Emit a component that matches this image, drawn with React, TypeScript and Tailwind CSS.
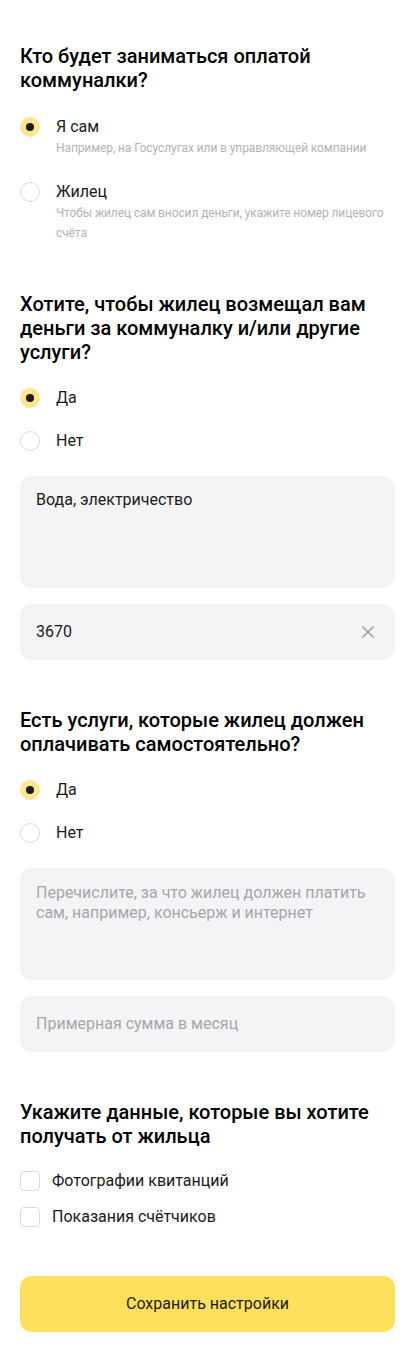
import React from "react";

function Radio({ checked, label, hint }: { checked?: boolean; label: string; hint?: string }) {
  return (
    <div className="flex items-start gap-4">
      <div className="h-6 flex items-center shrink-0">
        {checked ? (
          <div className="w-5 h-5 rounded-full bg-[#fde68f] flex items-center justify-center">
            <div className="w-2 h-2 rounded-full bg-[#1a1a1a]" />
          </div>
        ) : (
          <div className="w-5 h-5 rounded-full border border-[#d9d9d9] bg-white" />
        )}
      </div>
      <div className="flex flex-col">
        <div className="text-[16px] leading-6 text-[#1a1a1a]">{label}</div>
        {hint && <div className="text-[12px] leading-5 text-[#b3b3b3] mt-[-1px] tracking-[-0.1px]">{hint}</div>}
      </div>
    </div>
  );
}

function Checkbox({ label }: { label: string }) {
  return (
    <div className="flex items-center gap-3 h-6">
      <div className="w-5 h-5 rounded-[4px] border border-[#d9d9d9] bg-white shrink-0" />
      <div className="text-[16px] leading-6 text-[#1a1a1a]">{label}</div>
    </div>
  );
}

function H({ children }: { children: React.ReactNode }) {
  return <h2 className="text-[20px] leading-6 font-medium text-[#000]">{children}</h2>;
}

export default function App() {
  return (
    <div className="w-[415px] bg-white px-5 pt-[44px] pb-5" style={{ fontFamily: "Roboto, 'Noto Sans', sans-serif" }}>
      <H>Кто будет заниматься оплатой коммуналки?</H>
      <div className="mt-[23px] flex flex-col gap-[22px]">
        <Radio checked label="Я сам" hint="Например, на Госуслугах или в управляющей компании" />
        <Radio label="Жилец" hint="Чтобы жилец сам вносил деньги, укажите номер лицевого счёта" />
      </div>

      <div className="mt-[49px]">
        <H>Хотите, чтобы жилец возмещал вам деньги за коммуналку и/или другие услуги?</H>
      </div>
      <div className="mt-[22px] flex flex-col gap-[19px]">
        <Radio checked label="Да" />
        <Radio label="Нет" />
      </div>
      <div className="mt-[23px] h-[112px] rounded-xl bg-[#f4f4f6] px-4 pt-[14px] text-[16px] leading-5 text-[#1a1a1a]">
        Вода, электричество
      </div>
      <div className="mt-4 h-14 rounded-xl bg-[#f4f4f6] pl-4 pr-5 flex items-center justify-between text-[16px] text-[#1a1a1a]">
        <span>3670</span>
        <svg width="14" height="14" viewBox="0 0 14 14" fill="none">
          <path d="M1.5 1.5L12.5 12.5M12.5 1.5L1.5 12.5" stroke="#9e9ea3" strokeWidth="1.6" />
        </svg>
      </div>

      <div className="mt-12">
        <H>Есть услуги, которые жилец должен оплачивать самостоятельно?</H>
      </div>
      <div className="mt-[22px] flex flex-col gap-[19px]">
        <Radio checked label="Да" />
        <Radio label="Нет" />
      </div>
      <div className="mt-[23px] h-[112px] rounded-xl bg-[#f4f4f6] px-4 pt-[15px] text-[16px] leading-5 text-[#a6a6ab]">
        Перечислите, за что жилец должен платить сам, например, консьерж и интернет
      </div>
      <div className="mt-4 h-14 rounded-xl bg-[#f4f4f6] px-4 flex items-center text-[16px] text-[#a6a6ab]">
        Примерная сумма в месяц
      </div>

      <div className="mt-12">
        <H>Укажите данные, которые вы хотите получать от жильца</H>
      </div>
      <div className="mt-[21px] flex flex-col gap-3">
        <Checkbox label="Фотографии квитанций" />
        <Checkbox label="Показания счётчиков" />
      </div>

      <button className="mt-[47px] w-full h-14 rounded-xl bg-[#ffdf5c] text-[16px] text-[#1a1a1a]">
        Сохранить настройки
      </button>
    </div>
  );
}
